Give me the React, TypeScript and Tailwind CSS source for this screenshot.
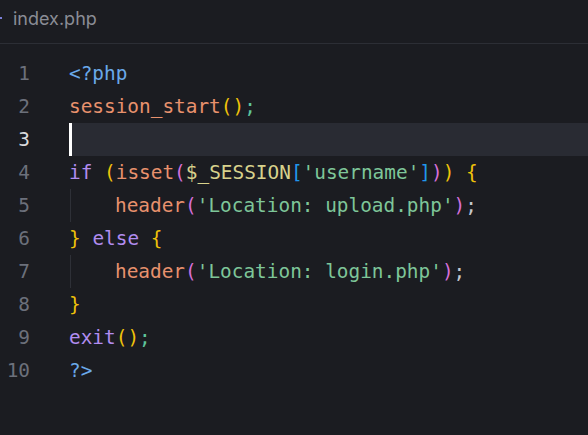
const C = {
  blue: "text-[#6aa9ea]",
  fn: "text-[#e8916d]",
  yellow: "text-[#f0c20a]",
  green: "text-[#7ec699]",
  semi: "text-[#5ec49b]",
  kw: "text-[#b18cf0]",
  pink: "text-[#d56fd8]",
  khaki: "text-[#d8d28c]",
  bracket: "text-[#2196ec]",
  plain: "text-[#c4c7ce]",
};

type Tok = [string, string];

const lines: { toks: Tok[]; indent?: boolean; active?: boolean }[] = [
  { toks: [["<?php", C.blue]] },
  { toks: [["session_start", C.fn], ["()", C.yellow], [";", C.semi]] },
  { toks: [], active: true },
  {
    toks: [
      ["if", C.kw],
      [" ", C.plain],
      ["(", C.yellow],
      ["isset", C.fn],
      ["(", C.pink],
      ["$_SESSION", C.khaki],
      ["[", C.bracket],
      ["'username'", C.green],
      ["]", C.bracket],
      [")", C.pink],
      [")", C.yellow],
      [" ", C.plain],
      ["{", C.yellow],
    ],
  },
  {
    indent: true,
    toks: [["header", C.fn], ["(", C.pink], ["'Location: upload.php'", C.green], [")", C.pink], [";", C.plain]],
  },
  { toks: [["}", C.yellow], [" ", C.plain], ["else", C.kw], [" ", C.plain], ["{", C.yellow]] },
  {
    indent: true,
    toks: [["header", C.fn], ["(", C.pink], ["'Location: login.php'", C.green], [")", C.pink], [";", C.plain]],
  },
  { toks: [["}", C.yellow]] },
  { toks: [["exit", C.kw], ["()", C.yellow], [";", C.semi]] },
  { toks: [["?>", C.blue]] },
];

export default function App() {
  return (
    <div className="w-[588px] h-[435px] bg-[#1b1c21] overflow-hidden">
      <div className="h-[44px] border-b border-[#2c2e35] flex items-center pb-[6px]">
        <span className="w-[2px] h-[2px] bg-[#7b7fd8] mt-[-2px]" />
        <span className="ml-[11px] text-[18px] text-[#8a8c95] font-['Inter','Noto_Sans',sans-serif]">
          index.php
        </span>
      </div>
      <div className="pt-[13px] font-['DejaVu_Sans_Mono',monospace] text-[19.4px] whitespace-pre">
        {lines.map((l, i) => (
          <div key={i} className="flex h-[33px] items-center">
            <span
              className={`w-[30px] text-right ${l.active ? "text-[#d8d9dc]" : "text-[#6c707b]"}`}
            >
              {i + 1}
            </span>
            <div
              className={`ml-[39px] flex-1 self-stretch flex items-center ${l.active ? "bg-[#292b33]" : ""}`}
            >
              {l.active && <span className="w-[3px] h-full bg-white" />}
              {l.indent && <span className="w-[46px] self-stretch border-l border-[#2e3037] ml-[1px] mr-[-1px]" />}
              {l.toks.map((t, j) => (
                <span key={j} className={t[1]}>
                  {t[0]}
                </span>
              ))}
            </div>
          </div>
        ))}
      </div>
    </div>
  );
}
